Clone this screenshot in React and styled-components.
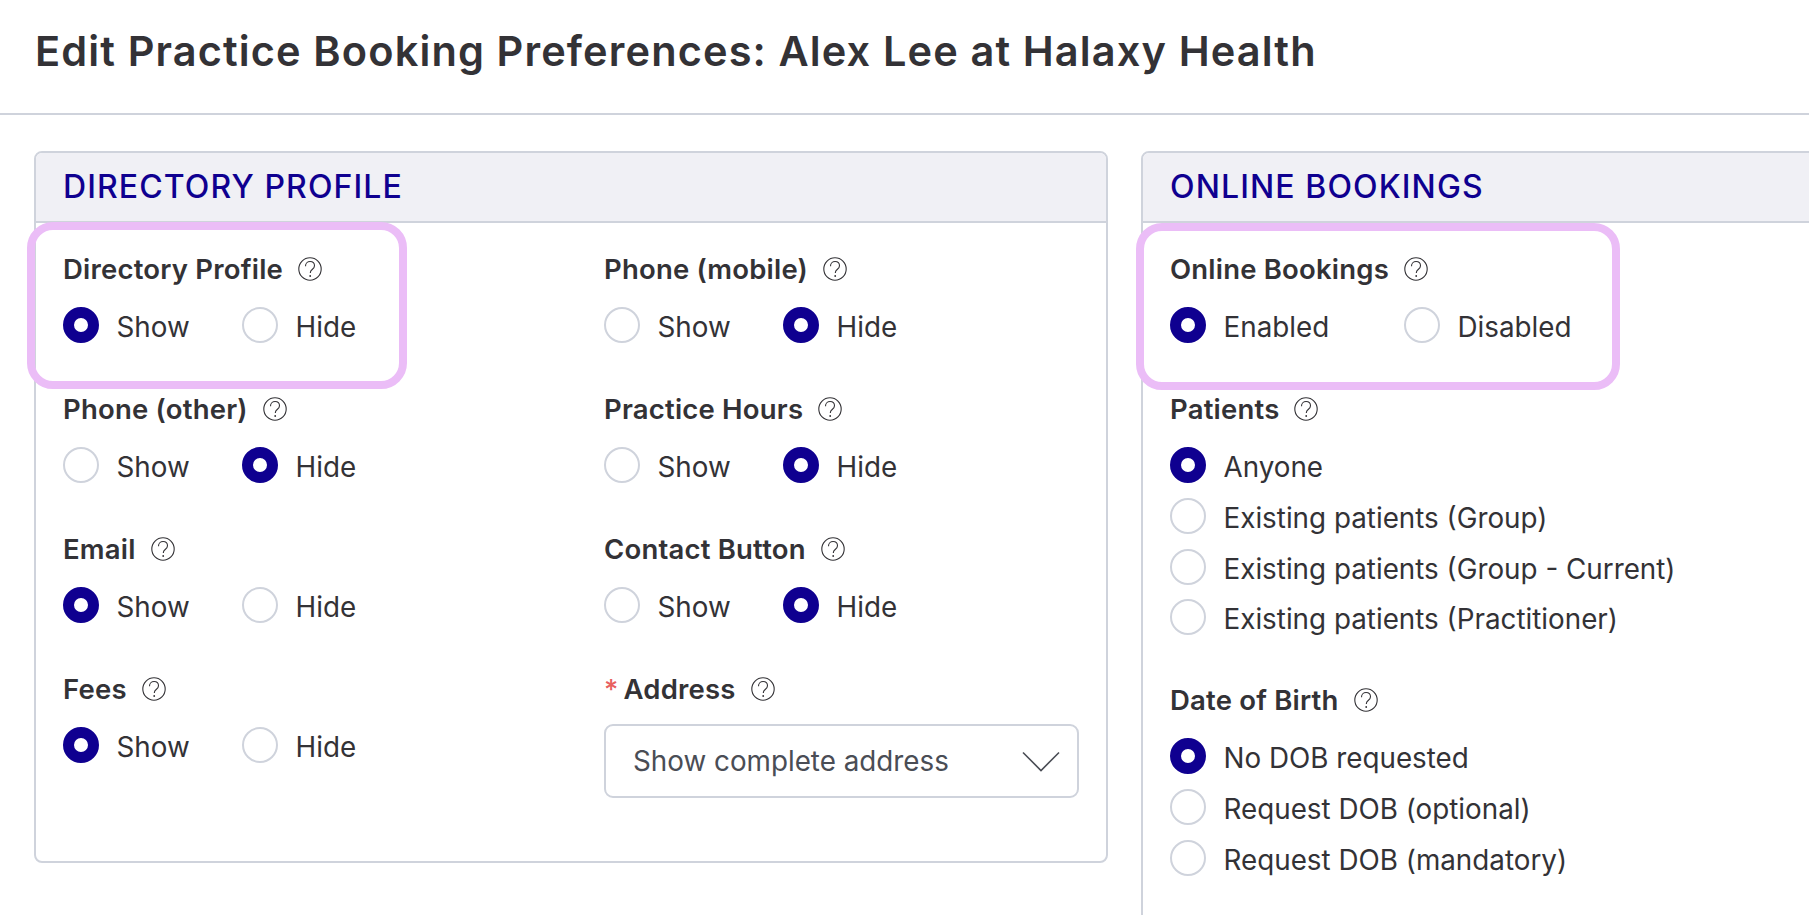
import styled, { createGlobalStyle } from "styled-components";

const GlobalStyle = createGlobalStyle`
  html, body {
    margin: 0;
    height: 915px;
    overflow: hidden;
    background: #fff;
  }
  body {
    font-family: Inter, "Liberation Sans", sans-serif;
    color: #333236;
  }
`;

function HelpIcon() {
  return (
    <HelpSvg viewBox="0 0 24 24" fill="none" stroke="#333236">
      <circle cx="12" cy="12" r="11.2" strokeWidth="1.1" />
      <path d="M7.5 9.2c0-2.8 2-4.7 4.6-4.7s4.4 1.8 4.4 4.2c0 1.8-1 2.8-2.3 3.8-1.2.9-1.9 1.8-1.9 3.4" strokeWidth="1.1" />
      <circle cx="12.2" cy="19" r="0.9" fill="#333236" stroke="none" />
    </HelpSvg>
  );
}

function Radio({ checked, label, width }) {
  return (
    <Option $width={width}>
      <Dot $checked={checked} />
      <OptionText>{label}</OptionText>
    </Option>
  );
}

function Field({ label, selected, options = ["Show", "Hide"], width = 179 }) {
  return (
    <FieldWrapper>
      <Label label={label} />
      <RadioRow>
        {options.map((o, i) => (
          <Radio key={o} label={o} checked={selected === o} width={i === 0 ? width : undefined} />
        ))}
      </RadioRow>
    </FieldWrapper>
  );
}

function Label({ label, required }) {
  return (
    <LabelRow>
      {required && <Required>*</Required>}
      <span>{label}</span>
      <HelpIcon />
    </LabelRow>
  );
}

export default function App() {
  return (
    <Page>
      <GlobalStyle />
      <PageHeader>
        <Title>Edit Practice Booking Preferences: Alex Lee at Halaxy Health</Title>
      </PageHeader>
      <Panels>
        <Panel $height={712}>
          <PanelTitle>
            <h2>Directory Profile</h2>
          </PanelTitle>
          <ProfileGrid>
            <Field label="Directory Profile" selected="Show" />
            <Field label="Phone (mobile)" selected="Hide" />
            <Field label="Phone (other)" selected="Hide" />
            <Field label="Practice Hours" selected="Hide" />
            <Field label="Email" selected="Show" />
            <Field label="Contact Button" selected="Hide" />
            <Field label="Fees" selected="Show" />
            <FieldWrapper>
              <Label label="Address" required />
              <Select>
                <span>Show complete address</span>
                <svg width="38" height="21" viewBox="0 0 38 21" fill="none" stroke="#4a4d55" strokeWidth="1.6">
                  <path d="M1 1.5 19 19.5 37 1.5" />
                </svg>
              </Select>
            </FieldWrapper>
          </ProfileGrid>
          <Highlight $left={-9} $width={380} />
        </Panel>
        <Panel>
          <PanelTitle>
            <h2>Online Bookings</h2>
          </PanelTitle>
          <BookingColumn>
            <Field
              label="Online Bookings"
              selected="Enabled"
              options={["Enabled", "Disabled"]}
              width={234}
            />
            <StackField>
              <Label label="Patients" />
              <RadioStack>
                <Radio checked label="Anyone" />
                <Radio label="Existing patients (Group)" />
                <Radio label="Existing patients (Group - Current)" />
                <Radio label="Existing patients (Practitioner)" />
              </RadioStack>
            </StackField>
            <StackField>
              <Label label="Date of Birth" />
              <RadioStack>
                <Radio checked label="No DOB requested" />
                <Radio label="Request DOB (optional)" />
                <Radio label="Request DOB (mandatory)" />
              </RadioStack>
            </StackField>
          </BookingColumn>
          <Highlight $left={-7} $width={484} $top={70} />
        </Panel>
      </Panels>
    </Page>
  );
}

const Page = styled.div`
  width: 1809px;
  height: 915px;
  overflow: hidden;
`;

const PageHeader = styled.header`
  height: 113px;
  border-bottom: 2px solid #cfd3dc;
  padding-left: 35px;
`;

const Title = styled.h1`
  margin: 0;
  padding-top: 25px;
  font-size: 41.5px;
  line-height: 52px;
  font-weight: 600;
  letter-spacing: 1.13px;
  white-space: nowrap;
  color: #333236;
`;

const Panels = styled.main`
  display: flex;
  gap: 33px;
  align-items: flex-start;
  padding: 36px 0 0 34px;
`;

const Panel = styled.section`
  position: relative;
  flex: none;
  width: 1074px;
  height: ${(p) => (p.$height ? `${p.$height}px` : "900px")};
  box-sizing: border-box;
  border: 2px solid #cfd3dc;
  border-radius: 8px;
`;

const PanelTitle = styled.div`
  height: 70px;
  display: flex;
  align-items: center;
  padding: 0 0 2px 27px;
  box-sizing: border-box;
  background: #f0f0f5;
  border-bottom: 2px solid #cfd3dc;
  border-radius: 6px 6px 0 0;

  h2 {
    margin: 0;
    font-size: 32px;
    font-weight: 500;
    letter-spacing: 1.1px;
    text-transform: uppercase;
    color: #0f0090;
  }
`;

const ProfileGrid = styled.div`
  display: grid;
  grid-template-columns: 541px 475px;
  grid-auto-rows: 140px;
  padding: 28px 0 0 27px;
`;

const BookingColumn = styled.div`
  padding: 28px 0 0 27px;
`;

const FieldWrapper = styled.div`
  height: 140px;
`;

const StackField = styled.div`
  margin-bottom: 47px;
`;

const LabelRow = styled.div`
  height: 36px;
  display: flex;
  align-items: center;
  font-size: 27.5px;
  font-weight: 600;
  letter-spacing: 0.2px;
  white-space: nowrap;
  color: #333236;
`;

const Required = styled.span`
  margin-right: 5px;
  color: #e8605f;
  font-weight: 500;
`;

const HelpSvg = styled.svg`
  width: 24px;
  height: 24px;
  margin-left: 15px;
  flex: none;
`;

const RadioRow = styled.div`
  display: flex;
  margin-top: 20px;
`;

const RadioStack = styled.div`
  display: flex;
  flex-direction: column;
  gap: 14.8px;
  margin-top: 20px;
`;

const Option = styled.label`
  display: flex;
  align-items: center;
  gap: 17.5px;
  height: 36px;
  width: ${(p) => (p.$width ? `${p.$width}px` : "auto")};
`;

const Dot = styled.span`
  flex: none;
  width: 36px;
  height: 36px;
  box-sizing: border-box;
  border-radius: 50%;
  background: #fff;
  border: ${(p) => (p.$checked ? "11px solid #0f0090" : "2px solid #cfd3dc")};
`;

const OptionText = styled.span`
  font-size: 27.8px;
  line-height: 36px;
  padding-top: 4px;
  white-space: nowrap;
  color: #333236;
`;

const Select = styled.div`
  display: flex;
  align-items: center;
  justify-content: space-between;
  box-sizing: border-box;
  width: 475px;
  height: 74px;
  margin-top: 17px;
  padding: 0 17px 0 27px;
  border: 2px solid #cfd3dc;
  border-radius: 9px;
  font-size: 27.8px;
  color: #4a4d55;
`;

const Highlight = styled.div`
  position: absolute;
  top: ${(p) => (p.$top ? `${p.$top}px` : "69px")};
  left: ${(p) => p.$left}px;
  width: ${(p) => p.$width}px;
  height: 167px;
  box-sizing: border-box;
  border: 8px solid #ebbdf7;
  border-radius: 26px;
  pointer-events: none;
`;
